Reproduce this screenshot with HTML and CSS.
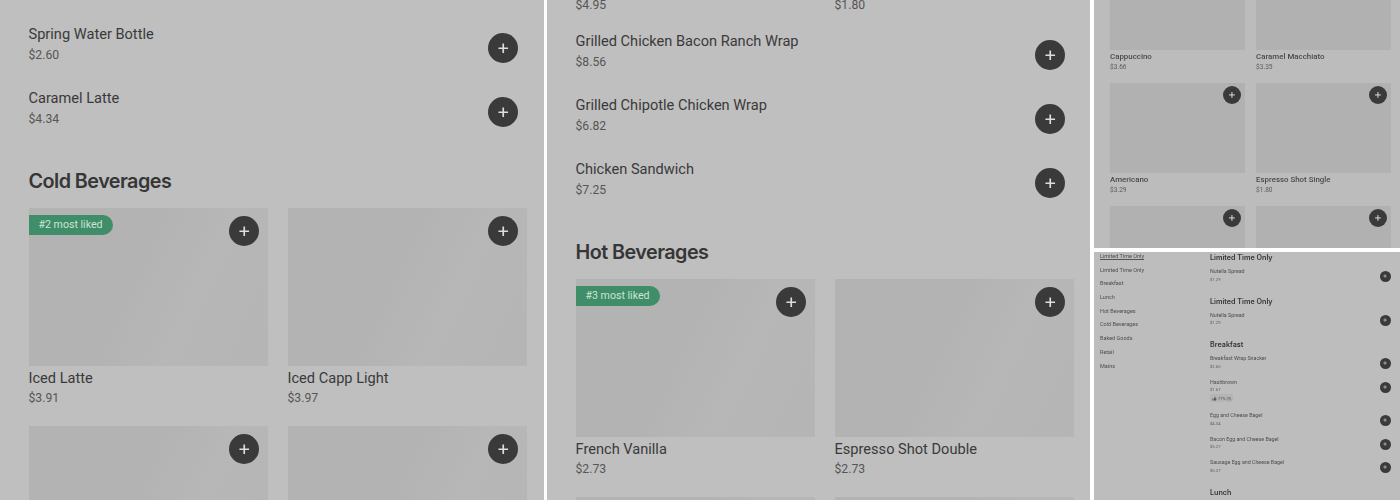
FILE: index.html
```html
<!DOCTYPE html>
<html lang="en">
<head>
<meta charset="UTF-8">
<meta name="viewport" content="width=device-width, initial-scale=1.0">
<title>Menu screens</title>
<link rel="stylesheet" href="styles.css">
</head>
<body>
<svg width="0" height="0" class="sprite">
  <symbol id="plus" viewBox="0 0 24 24"><path d="M12 5v14M5 12h14" fill="none" stroke="currentColor" stroke-width="2.4"/></symbol>
</svg>
<div class="screens">

  <div class="panel panel-a">
    <div class="row">
      <div class="row-text"><div class="name">Spring Water Bottle</div><div class="price">$2.60</div></div>
      <button class="add"><svg><use href="#plus"/></svg></button>
    </div>
    <div class="row">
      <div class="row-text"><div class="name">Caramel Latte</div><div class="price">$4.34</div></div>
      <button class="add"><svg><use href="#plus"/></svg></button>
    </div>
    <h2 class="section-title">Cold Beverages</h2>
    <div class="cards">
      <div class="card">
        <div class="photo"><span class="liked">#2 most liked</span><button class="add"><svg><use href="#plus"/></svg></button></div>
        <div class="name">Iced Latte</div><div class="price">$3.91</div>
      </div>
      <div class="card">
        <div class="photo"><button class="add"><svg><use href="#plus"/></svg></button></div>
        <div class="name">Iced Capp Light</div><div class="price">$3.97</div>
      </div>
      <div class="card">
        <div class="photo"><button class="add"><svg><use href="#plus"/></svg></button></div>
      </div>
      <div class="card">
        <div class="photo"><button class="add"><svg><use href="#plus"/></svg></button></div>
      </div>
    </div>
  </div>

  <div class="panel panel-b">
    <div class="cards top-prices">
      <div class="price">$4.95</div>
      <div class="price">$1.80</div>
    </div>
    <div class="row">
      <div class="row-text"><div class="name">Grilled Chicken Bacon Ranch Wrap</div><div class="price">$8.56</div></div>
      <button class="add"><svg><use href="#plus"/></svg></button>
    </div>
    <div class="row">
      <div class="row-text"><div class="name">Grilled Chipotle Chicken Wrap</div><div class="price">$6.82</div></div>
      <button class="add"><svg><use href="#plus"/></svg></button>
    </div>
    <div class="row">
      <div class="row-text"><div class="name">Chicken Sandwich</div><div class="price">$7.25</div></div>
      <button class="add"><svg><use href="#plus"/></svg></button>
    </div>
    <h2 class="section-title">Hot Beverages</h2>
    <div class="cards">
      <div class="card">
        <div class="photo"><span class="liked">#3 most liked</span><button class="add"><svg><use href="#plus"/></svg></button></div>
        <div class="name">French Vanilla</div><div class="price">$2.73</div>
      </div>
      <div class="card">
        <div class="photo"><button class="add"><svg><use href="#plus"/></svg></button></div>
        <div class="name">Espresso Shot Double</div><div class="price">$2.73</div>
      </div>
      <div class="card"><div class="photo"></div></div>
      <div class="card"><div class="photo"></div></div>
    </div>
  </div>

  <div class="stack">
    <div class="panel panel-c">
      <div class="cards">
        <div class="card">
          <div class="photo"></div>
          <div class="name">Cappuccino</div><div class="price">$3.66</div>
        </div>
        <div class="card">
          <div class="photo"></div>
          <div class="name">Caramel Macchiato</div><div class="price">$3.35</div>
        </div>
        <div class="card">
          <div class="photo"><button class="add"><svg><use href="#plus"/></svg></button></div>
          <div class="name">Americano</div><div class="price">$3.29</div>
        </div>
        <div class="card">
          <div class="photo"><button class="add"><svg><use href="#plus"/></svg></button></div>
          <div class="name">Espresso Shot Single</div><div class="price">$1.80</div>
        </div>
        <div class="card">
          <div class="photo"><button class="add"><svg><use href="#plus"/></svg></button></div>
        </div>
        <div class="card">
          <div class="photo"><button class="add"><svg><use href="#plus"/></svg></button></div>
        </div>
      </div>
    </div>

    <div class="panel panel-d">
      <ul class="side-nav">
        <li class="current"><a href="#">Limited Time Only</a></li>
        <li><a href="#">Limited Time Only</a></li>
        <li><a href="#">Breakfast</a></li>
        <li><a href="#">Lunch</a></li>
        <li><a href="#">Hot Beverages</a></li>
        <li><a href="#">Cold Beverages</a></li>
        <li><a href="#">Baked Goods</a></li>
        <li><a href="#">Retail</a></li>
        <li><a href="#">Mains</a></li>
      </ul>
      <div class="menu">
        <h2 class="section-title">Limited Time Only</h2>
        <div class="row">
          <div class="row-text"><div class="name">Nutella Spread</div><div class="price">$1.29</div></div>
          <button class="add"><svg><use href="#plus"/></svg></button>
        </div>
        <h2 class="section-title">Limited Time Only</h2>
        <div class="row">
          <div class="row-text"><div class="name">Nutella Spread</div><div class="price">$1.29</div></div>
          <button class="add"><svg><use href="#plus"/></svg></button>
        </div>
        <h2 class="section-title">Breakfast</h2>
        <div class="row">
          <div class="row-text"><div class="name">Breakfast Wrap Snacker</div><div class="price">$2.60</div></div>
          <button class="add"><svg><use href="#plus"/></svg></button>
        </div>
        <div class="row row-tall">
          <div class="row-text">
            <div class="name">Hashbrown</div><div class="price">$1.67</div>
            <span class="rating"><svg viewBox="0 0 10 10"><path d="M1 5h2v4H1zM4 9V5l2-4 1 1-.5 2.5H9L8 9z" fill="currentColor"/></svg>77% (9)</span>
          </div>
          <button class="add"><svg><use href="#plus"/></svg></button>
        </div>
        <div class="row">
          <div class="row-text"><div class="name">Egg and Cheese Bagel</div><div class="price">$4.34</div></div>
          <button class="add"><svg><use href="#plus"/></svg></button>
        </div>
        <div class="row">
          <div class="row-text"><div class="name">Bacon Egg and Cheese Bagel</div><div class="price">$5.27</div></div>
          <button class="add"><svg><use href="#plus"/></svg></button>
        </div>
        <div class="row">
          <div class="row-text"><div class="name">Sausage Egg and Cheese Bagel</div><div class="price">$5.27</div></div>
          <button class="add"><svg><use href="#plus"/></svg></button>
        </div>
        <h2 class="section-title">Lunch</h2>
      </div>
    </div>
  </div>

</div>
</body>
</html>
```

FILE: styles.css
```css
body {
    margin: 0;
    background-color: #fff;
    font-family: Roboto, "Liberation Sans", sans-serif;
    color: #3b3b3b;
}
.sprite {
    position: absolute;
}
.screens {
    display: flex;
    width: 1400px;
    height: 500px;
    overflow: hidden;
}
.panel {
    background-color: #bfbfbf;
    overflow: hidden;
    box-sizing: border-box;
}
.stack {
    width: 306px;
    margin-left: 4px;
    display: flex;
    flex-direction: column;
    gap: 4px;
}

/* shared pieces, sizes set per panel below */
.row {
    display: flex;
    justify-content: space-between;
    align-items: center;
    height: 64px;
    margin-right: 8px;
}
.row-text {
    align-self: flex-start;
    padding-top: 8px;
}
.name {
    font-size: 14.6px;
    line-height: 20px;
    font-weight: 400;
    color: #3a3a3a;
}
.price {
    font-size: 12.2px;
    line-height: 20px;
    margin-top: 1px;
    color: #565656;
}
.card .price {
    margin-top: 0;
}
.section-title {
    margin: 0;
    height: 64px;
    padding-top: 25px;
    box-sizing: border-box;
    font-family: Inter, "Liberation Sans", sans-serif;
    font-size: 19.8px;
    line-height: 24px;
    font-weight: 600;
    letter-spacing: -0.55px;
    color: #363636;
}
.cards {
    display: grid;
    grid-template-columns: 239px 239px;
    column-gap: 20px;
}
.card {
    height: 218px;
}
.photo {
    position: relative;
    height: 158px;
    margin-bottom: 2px;
    background: linear-gradient(115deg, #b3b3b3 45%, #b7b7b7 65%, #b5b5b5);
}
.add {
    display: flex;
    align-items: center;
    justify-content: center;
    flex: none;
    width: 30px;
    height: 30px;
    padding: 0;
    border: none;
    border-radius: 50%;
    background-color: #3a3a3a;
    color: #dedede;
}
.add svg {
    width: 55%;
    height: 55%;
}
.photo .add {
    position: absolute;
    top: 8px;
    right: 8.5px;
}
.liked {
    position: absolute;
    top: 7px;
    left: 0;
    height: 20px;
    padding: 0 10px;
    border-radius: 0 10px 10px 0;
    background-color: #3f8e69;
    color: #cfe2d7;
    font-size: 10.6px;
    line-height: 20px;
}

/* panel a and b: big phone view */
.panel-a,
.panel-b {
    padding: 16px 18px 0 28.5px;
}
.panel-a {
    width: 544px;
}
.panel-b {
    width: 543px;
    margin-left: 3px;
}
.panel-b .row {
    margin-right: 7px;
}
.top-prices {
    height: 23px;
    margin-top: -22px;
    align-items: end;
    padding-bottom: 8px;
    box-sizing: border-box;
}
.panel-b .top-prices + .row {
    margin-top: 6px;
}

/* panel c: small card grid */
.panel-c {
    height: 248px;
    padding-left: 16px;
    background-color: #bcbcbc;
}
.panel-c .cards {
    grid-template-columns: 135px 135px;
    column-gap: 11px;
    margin-top: -40px;
    filter: grayscale(1);
}
.panel-c .card {
    height: 123px;
}
.panel-c .photo {
    height: 90px;
    margin-bottom: 1px;
    background: #b1b1b1;
}
.panel-c .add {
    width: 18px;
    height: 18px;
    top: 3px;
    right: 4px;
}
.panel-c .name {
    font-size: 7.9px;
    line-height: 11px;
    font-weight: 500;
    margin-top: 0.5px;
    color: #4a4a4a;
}
.panel-c .price {
    font-size: 6.6px;
    line-height: 10px;
    color: #5c5c5c;
}

.panel-d {
    height: 248px;
    display: flex;
    background-color: #bdbdbd;
    padding-left: 6px;
}
.side-nav {
    list-style: none;
    width: 110px;
    margin: 0;
    padding: 0;
    flex: none;
    filter: grayscale(1) blur(0.3px);
}
.side-nav li {
    height: 13.7px;
    font-size: 5.5px;
    line-height: 9px;
}
.side-nav a {
    color: #4d4d4d;
    text-decoration: none;
}
.side-nav .current a {
    border-bottom: 1px solid #555;
}
.menu {
    width: 181px;
    margin-top: -6.5px;
    filter: grayscale(1) blur(0.3px);
}
.panel-d .section-title {
    height: 20px;
    padding: 7.5px 0 0;
    font-size: 7.2px;
    line-height: 10px;
    letter-spacing: 0;
}
.panel-d .row {
    height: 23.5px;
    margin-right: 0;
}
.panel-d .row-tall {
    height: 33.5px;
    align-items: flex-start;
}
.panel-d .row-tall .add {
    margin-top: 6px;
}
.panel-d .row-text {
    padding-top: 2.5px;
}
.panel-d .name {
    font-size: 5.3px;
    line-height: 7px;
    color: #4d4d4d;
}
.panel-d .price {
    font-size: 4.2px;
    line-height: 7px;
    margin-top: 0.5px;
    color: #5c5c5c;
}
.panel-d .add {
    width: 11px;
    height: 11px;
    margin-bottom: 1.5px;
}
.rating {
    display: flex;
    width: fit-content;
    align-items: center;
    gap: 1px;
    height: 8px;
    margin-top: 1px;
    padding: 0 2px;
    background-color: #b4b4b4;
    border-radius: 2px;
    font-size: 4px;
    color: #555;
}
.rating svg {
    width: 5px;
    height: 5px;
}
```
